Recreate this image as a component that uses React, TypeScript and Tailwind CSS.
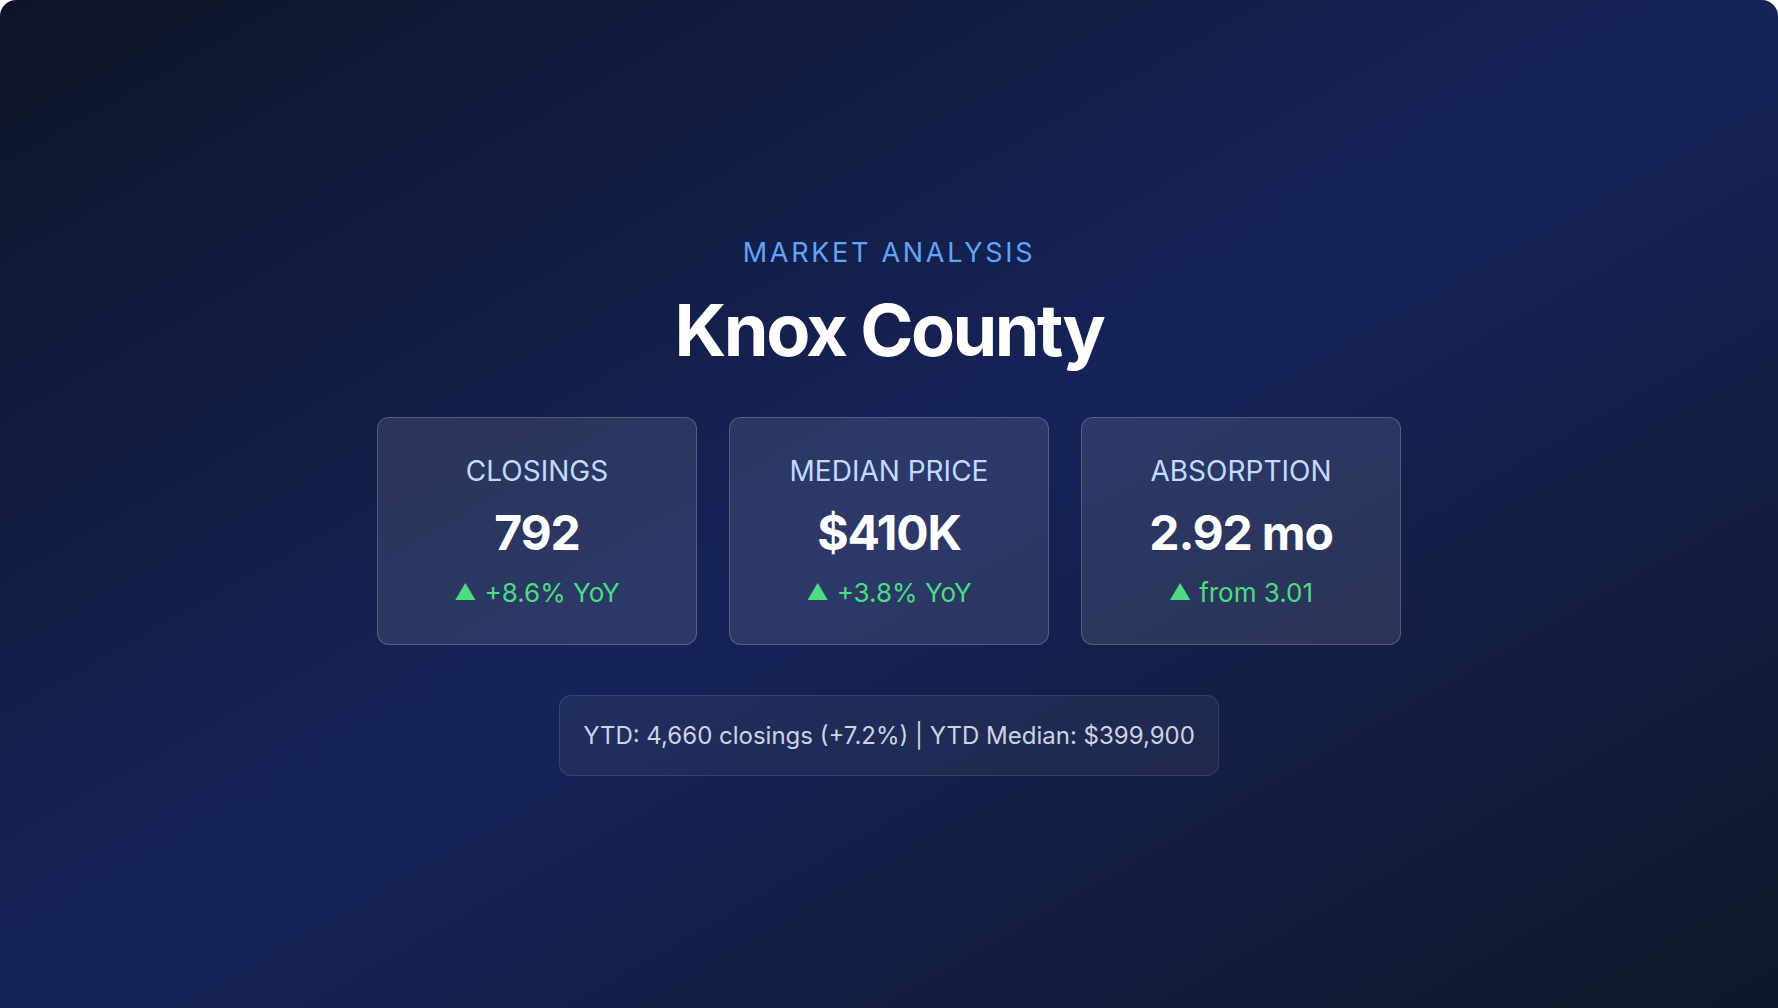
import React from "react";

type Stat = {
  label: string;
  value: string;
  change: string;
};

const stats: Stat[] = [
  { label: "Closings", value: "792", change: "+8.6% YoY" },
  { label: "Median Price", value: "$410K", change: "+3.8% YoY" },
  { label: "Absorption", value: "2.92 mo", change: "from 3.01" },
];

function StatCard({ stat }: { stat: Stat }) {
  return (
    <div className="w-[320px] rounded-[12px] border-[1.5px] border-white/20 bg-white/10 p-9 text-center">
      <div className="text-[28px] leading-[35px] uppercase text-[#bfdbfe]">
        {stat.label}
      </div>
      <div className="mt-[15px] text-[48px] leading-[58px] font-bold tracking-tight text-white">
        {stat.value}
      </div>
      <div className="mt-[15px] flex items-center justify-center gap-2 text-[26px] leading-[31px] text-[#4ade80]">
        <span className="text-[22px]">▲</span>
        <span>{stat.change}</span>
      </div>
    </div>
  );
}

export default function App() {
  return (
    <div className="flex h-screen w-full flex-col items-center justify-center overflow-hidden rounded-t-2xl bg-gradient-to-br from-[#0e1529] via-[#162359] to-[#0f172a] font-['Inter','Liberation_Sans',sans-serif]">
      <div className="text-[27px] leading-[40px] tracking-widest uppercase text-[#60a5fa]">
        Market Analysis
      </div>
      <h1 className="mt-[17px] text-[72px] leading-[80px] font-bold tracking-[-0.035em] text-white">
        Knox County
      </h1>

      <div className="mt-[47px] flex gap-8">
        {stats.map((s) => (
          <StatCard key={s.label} stat={s} />
        ))}
      </div>

      <div className="mt-[50px] rounded-[12px] border-[1.5px] border-white/10 bg-white/5 px-[23px] py-6 text-[24px] leading-[31px] text-[#cbd5e1]">
        YTD: 4,660 closings (+7.2%) | YTD Median: $399,900
      </div>
    </div>
  );
}
